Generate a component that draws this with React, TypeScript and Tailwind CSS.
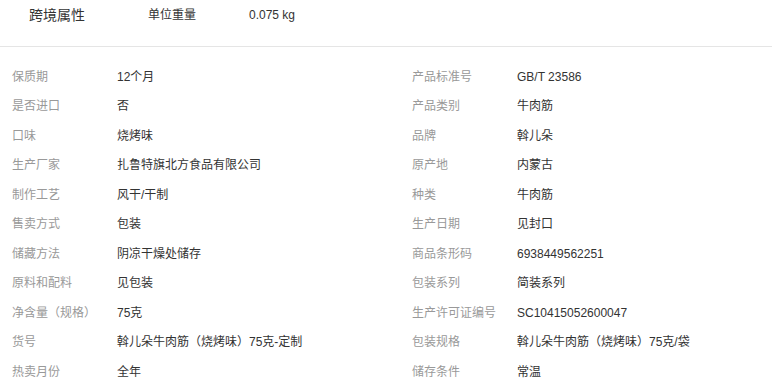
import React from "react";

interface Attr {
  label: string;
  value: string;
}

const leftAttrs: Attr[] = [
  { label: "保质期", value: "12个月" },
  { label: "是否进口", value: "否" },
  { label: "口味", value: "烧烤味" },
  { label: "生产厂家", value: "扎鲁特旗北方食品有限公司" },
  { label: "制作工艺", value: "风干/干制" },
  { label: "售卖方式", value: "包装" },
  { label: "储藏方法", value: "阴凉干燥处储存" },
  { label: "原料和配料", value: "见包装" },
  { label: "净含量（规格）", value: "75克" },
  { label: "货号", value: "斡儿朵牛肉筋（烧烤味）75克-定制" },
  { label: "热卖月份", value: "全年" },
];

const rightAttrs: Attr[] = [
  { label: "产品标准号", value: "GB/T 23586" },
  { label: "产品类别", value: "牛肉筋" },
  { label: "品牌", value: "斡儿朵" },
  { label: "原产地", value: "内蒙古" },
  { label: "种类", value: "牛肉筋" },
  { label: "生产日期", value: "见封口" },
  { label: "商品条形码", value: "6938449562251" },
  { label: "包装系列", value: "简装系列" },
  { label: "生产许可证编号", value: "SC10415052600047" },
  { label: "包装规格", value: "斡儿朵牛肉筋（烧烤味）75克/袋" },
  { label: "储存条件", value: "常温" },
];

const AttrRow: React.FC<{ attr: Attr }> = ({ attr }) => (
  <div className="flex items-center h-[29.5px] pl-[12px] text-[12px] leading-[16px]">
    <span className="w-[105px] shrink-0 text-[#999999]">{attr.label}</span>
    <span className="text-[#333333]">{attr.value}</span>
  </div>
);

const App: React.FC = () => {
  return (
    <div
      className="w-[772px] h-[387px] bg-white overflow-hidden"
      style={{ fontFamily: '"Liberation Sans", "Noto Sans CJK SC", sans-serif' }}
    >
      <div className="h-[47px] border-b border-[#e5e5e5] flex items-start pt-[6px]">
        <span className="ml-[29px] w-[119px] text-[14px] leading-[18px] text-[#333333]">跨境属性</span>
        <span className="w-[101px] text-[12px] leading-[18px] text-[#333333]">单位重量</span>
        <span className="text-[12px] leading-[18px] text-[#333333]">0.075 kg</span>
      </div>
      <div className="grid grid-cols-[400px_1fr] mt-[15px]">
        <div className="flex flex-col">
          {leftAttrs.map((a) => (
            <AttrRow key={a.label} attr={a} />
          ))}
        </div>
        <div className="flex flex-col">
          {rightAttrs.map((a) => (
            <AttrRow key={a.label} attr={a} />
          ))}
        </div>
      </div>
    </div>
  );
};

export default App;
